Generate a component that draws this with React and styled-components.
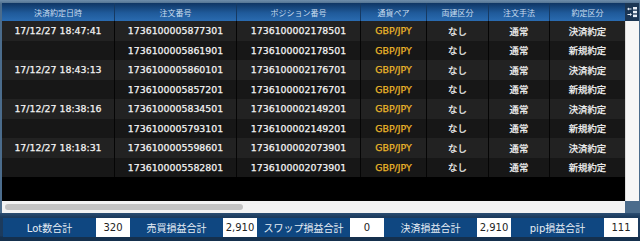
import React from "react";
import styled, { createGlobalStyle } from "styled-components";

const GlobalStyle = createGlobalStyle`
  html, body {
    margin: 0;
    padding: 0;
    background: #1c3b5d;
  }
  body {
    font-family: "DejaVu Sans", "Noto Sans CJK JP", sans-serif;
  }
`;

const FONT = `"DejaVu Sans", "Noto Sans CJK JP", sans-serif`;

const COLS = [113, 122, 124, 66, 62, 61, 75];

const Page = styled.div`
  width: 640px;
  height: 241px;
  display: flex;
  flex-direction: column;
`;

const Frame = styled.div`
  padding: 3px 1px 0 2px;
  background: linear-gradient(#6f8eab, #4b6c8c 4px, #4b6c8c);
  display: grid;
  grid-template-columns: 623px 14px;
  grid-template-rows: 18px 180px 12px;
`;

const HeaderRow = styled.div`
  display: grid;
  grid-template-columns: ${COLS.map((c) => c + "px").join(" ")};
`;

const HeadCell = styled.div`
  display: flex;
  align-items: center;
  justify-content: center;
  background: linear-gradient(#0f3563, #1f5a9a 55%, #2a6bb0);
  border-right: 1px solid #163a63;
  color: #c9dcef;
  font-size: 8px;
  font-family: ${FONT};
  &:last-child {
    border-right: none;
  }
`;

const IconCell = styled.div`
  display: flex;
  align-items: center;
  justify-content: center;
  background: #1b3654;
`;

const Body = styled.div`
  background: #000;
  display: flex;
  flex-direction: column;
  overflow: hidden;
`;

const Row = styled.div`
  display: grid;
  grid-template-columns: ${COLS.map((c) => c + "px").join(" ")};
  height: 19.5px;
  flex: 0 0 19.5px;
  background: ${(p) => (p.$odd ? "#222222" : "#171717")};
`;

const Cell = styled.div`
  display: flex;
  align-items: center;
  justify-content: center;
  border-right: 1px solid #050505;
  color: ${(p) => (p.$gold ? "#edb82a" : "#f4f4f4")};
  font-size: 9.4px;
  font-family: ${FONT};
  -webkit-text-stroke: 0.25px currentColor;
  white-space: nowrap;
  &:last-child {
    border-right: none;
  }
`;

const VScroll = styled.div`
  background: #f6f6f6;
  border-left: 1px solid #dcdcdc;
`;

const HScroll = styled.div`
  background: #f3f3f3;
  display: flex;
  align-items: center;
  padding-left: 3px;
`;

const Thumb = styled.div`
  width: 238px;
  height: 6px;
  border-radius: 3px;
  background: #c3c3c3;
`;

const Corner = styled.div`
  background: #4b6c8c;
`;

const Footer = styled.div`
  flex: 1;
  display: flex;
  padding: 5px 0 0 3px;
  background: linear-gradient(#2b4d72, #1c3b5d 4px, #1c3b5d 23px, #15304d 24px);
`;

const Group = styled.div`
  display: flex;
  height: 19px;
`;

const Label = styled.div`
  width: 93px;
  display: flex;
  align-items: center;
  justify-content: center;
  background: #0f4781;
  color: #e6edf5;
  font-size: 10px;
  font-family: ${FONT};
`;

const Value = styled.div`
  width: 34px;
  display: flex;
  align-items: center;
  justify-content: center;
  background: #ffffff;
  color: #222;
  font-size: 10px;
  font-family: ${FONT};
`;

const headers = [
  "決済約定日時",
  "注文番号",
  "ポジション番号",
  "通貨ペア",
  "両建区分",
  "注文手法",
  "約定区分",
];

const rows = [
  ["17/12/27 18:47:41", "1736100005877301", "1736100002178501", "決済約定"],
  ["", "1736100005861901", "1736100002178501", "新規約定"],
  ["17/12/27 18:43:13", "1736100005860101", "1736100002176701", "決済約定"],
  ["", "1736100005857201", "1736100002176701", "新規約定"],
  ["17/12/27 18:38:16", "1736100005834501", "1736100002149201", "決済約定"],
  ["", "1736100005793101", "1736100002149201", "新規約定"],
  ["17/12/27 18:18:31", "1736100005598601", "1736100002073901", "決済約定"],
  ["", "1736100005582801", "1736100002073901", "新規約定"],
];

const totals = [
  ["Lot数合計", "320"],
  ["売買損益合計", "2,910"],
  ["スワップ損益合計", "0"],
  ["決済損益合計", "2,910"],
  ["pip損益合計", "111"],
];

function ColumnIcon() {
  return (
    <svg width="11" height="12" viewBox="0 0 11 12">
      <g fill="#e8eef5">
        <rect x="6" y="1" width="4" height="2.5" />
        <rect x="6" y="4.8" width="4" height="2.5" />
        <rect x="6" y="8.6" width="4" height="2.5" />
        <path d="M0 3 L2 1.5 L2 2.5 L4.5 2.5 L4.5 3.5 L2 3.5 L2 4.5 Z" />
        <path d="M5 8.5 L3 7 L3 8 L0.5 8 L0.5 9 L3 9 L3 10 Z" />
      </g>
    </svg>
  );
}

export default function App() {
  return (
    <>
      <GlobalStyle />
      <Page>
        <Frame>
          <HeaderRow>
            {headers.map((h) => (
              <HeadCell key={h}>{h}</HeadCell>
            ))}
          </HeaderRow>
          <IconCell>
            <ColumnIcon />
          </IconCell>
          <Body>
            {rows.map((r, i) => (
              <Row key={i} $odd={i % 2 === 0}>
                <Cell>{r[0]}</Cell>
                <Cell>{r[1]}</Cell>
                <Cell>{r[2]}</Cell>
                <Cell $gold>GBP/JPY</Cell>
                <Cell>なし</Cell>
                <Cell>通常</Cell>
                <Cell>{r[3]}</Cell>
              </Row>
            ))}
          </Body>
          <VScroll />
          <HScroll>
            <Thumb />
          </HScroll>
          <Corner />
        </Frame>
        <Footer>
          {totals.map(([label, value]) => (
            <Group key={label}>
              <Label>{label}</Label>
              <Value>{value}</Value>
            </Group>
          ))}
        </Footer>
      </Page>
    </>
  );
}
